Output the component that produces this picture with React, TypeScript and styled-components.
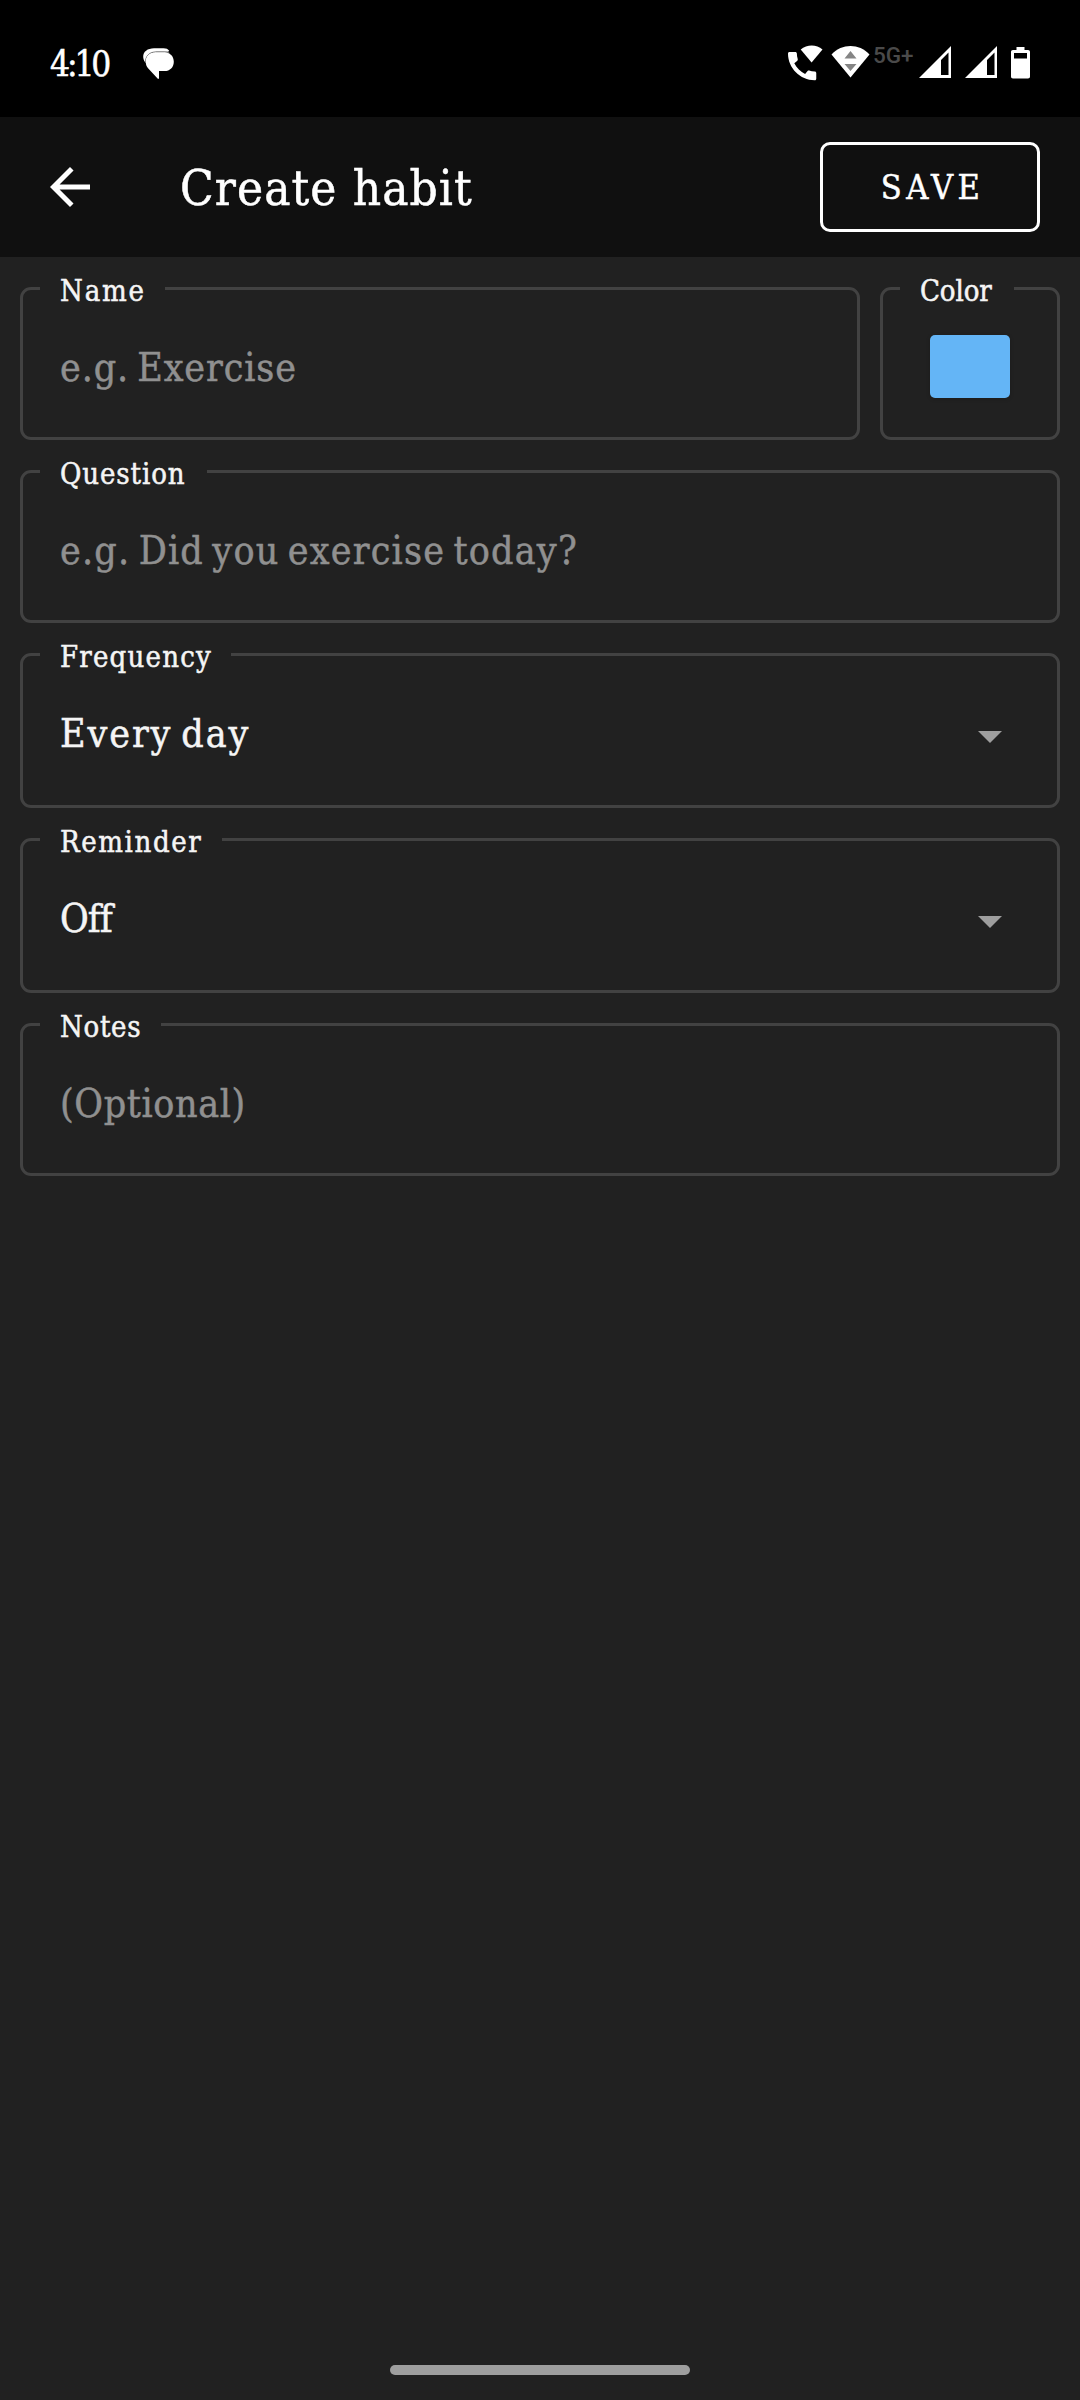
import React from "react";
import styled, { createGlobalStyle } from "styled-components";

const Global = createGlobalStyle`
  * { box-sizing: border-box; }
  html, body { margin: 0; background: #212121; }
`;

const Screen = styled.main`
  display: flex;
  flex-direction: column;
  width: 1080px;
  height: 2400px;
  background: #212121;
  color: #f5f5f5;
  font-family: "Roboto Slab", "DejaVu Serif Condensed", "DejaVu Serif", serif;
  -webkit-text-stroke: 0.5px currentColor;
  overflow: hidden;
`;

const StatusBar = styled.header`
  display: flex;
  justify-content: space-between;
  height: 117px;
  padding: 45px 50px 0 50px;
  background: #000;
  color: #fff;
`;

const StatusGroup = styled.div`
  display: flex;
  align-items: flex-start;
`;

const Clock = styled.time`
  width: 93px;
  padding-top: 1px;
  font-size: 35px;
  line-height: 37px;
  letter-spacing: -3.100px;
  white-space: nowrap;
`;

const NetworkType = styled.span`
  width: 49px;
  padding-left: 3px;
  color: #4a4a4a;
  font-family: Roboto, sans-serif;
  font-size: 22.500px;
  font-weight: 500;
  line-height: 21px;
  white-space: nowrap;
  -webkit-text-stroke: 0;
`;

const StatusIcon = styled.svg<{ $gap?: number }>`
  display: block;
  flex: none;
  margin-right: ${(p) => p.$gap ?? 0}px;
`;

const AppBar = styled.div`
  display: flex;
  align-items: center;
  height: 140px;
  padding: 0 40px 0 50px;
  background: #101010;
  color: #fff;
`;

const IconButton = styled.button`
  display: flex;
  width: 40px;
  height: 40px;
  padding: 0;
  border: 0;
  background: none;
  color: inherit;
`;

const Title = styled.h1`
  flex: 1;
  margin: 0 0 0 90px;
  padding-top: 3px;
  font-size: 49px;
  font-weight: 400;
  line-height: 60px;
  letter-spacing: 1.100px;
`;

const SaveButton = styled.button`
  width: 220px;
  height: 90px;
  padding: 0 0 0 5px;
  border: 3px solid #fff;
  border-radius: 10px;
  background: none;
  color: inherit;
  font: inherit;
  font-size: 34px;
  letter-spacing: 4.400px;
`;

const Form = styled.form`
  display: flex;
  flex: 1;
  flex-direction: column;
  gap: 15px;
  padding: 15px 20px 0;
`;

const Row = styled.div`
  display: flex;
  gap: 20px;
`;

const Field = styled.fieldset<{ $width?: number; $height?: number }>`
  flex: none;
  width: ${(p) => p.$width ?? 1040}px;
  height: ${(p) => p.$height ?? 168}px;
  min-width: 0;
  margin: 0;
  padding: 0 55px 0 37px;
  border: 3px solid #424242;
  border-radius: 11px;
`;

const Label = styled.legend<{ $width: number; $track: number }>`
  width: ${(p) => p.$width}px;
  height: 33px;
  margin-left: -20px;
  padding: 5px 0 0 20px;
  font-size: 29px;
  line-height: 28px;
  letter-spacing: ${(p) => p.$track}px;
  white-space: nowrap;
`;

const Value = styled.div<{ $track: number; $hint?: boolean }>`
  display: flex;
  align-items: center;
  justify-content: space-between;
  height: 112px;
  padding-top: 13px;
  color: ${(p) => (p.$hint ? "#909090" : "#f5f5f5")};
  font-size: 39px;
  line-height: 50px;
  letter-spacing: ${(p) => p.$track}px;
  word-spacing: -4px;
  white-space: nowrap;
`;

const Caret = styled.svg`
  display: block;
  width: 24px;
  height: 12px;
  margin-top: 6px;
  fill: #9e9e9e;
`;

const Swatch = styled.div`
  width: 80px;
  height: 63px;
  margin: 30px 0 0 10px;
  border-radius: 5px;
  background: #64b5f6;
  box-shadow: 0 1px 4px rgba(0, 0, 0, 0.2);
`;

const NavBar = styled.footer`
  display: flex;
  justify-content: center;
  height: 35px;
`;

const NavHandle = styled.div`
  width: 300px;
  height: 10px;
  border-radius: 5px;
  background: #9e9e9e;
`;

const Down = () => (
  <Caret viewBox="0 0 24 12">
    <path d="M0 0h24L12 12z" />
  </Caret>
);

const Signal = ({ gap }: { gap: number }) => (
  <StatusIcon $gap={gap} width="32" height="33" viewBox="0 0 32 33">
    <path fill="#fff" fillRule="evenodd" d="M0 33 32 1v32zM22 15v15h7.500V7.500z" />
  </StatusIcon>
);

export default function App() {
  return (
    <Screen>
      <Global />
      <StatusBar>
        <StatusGroup>
          <Clock>4:10</Clock>
          <StatusIcon width="32" height="36" viewBox="0 0 32 36">
            <path
              fill="#fff"
              d="M11 3.300h9.500c2.800 0 4.500.8 5.700 2.500l-1 1H13.500C7 6.800 3.300 10.500 2.300 17.500.8 15.500.2 13.500.2 11.800.2 6.800 4.500 3.300 11 3.300z"
            />
            <path
              fill="#fff"
              stroke="#777"
              strokeWidth="1"
              d="M2.500 17.500C2.300 11 6.500 7 12.500 7h9c2 0 3.700.4 5 1.200"
            />
            <path
              fill="#fff"
              d="M12.500 7.500h9c5.500 0 9.300 3.600 9.300 9.200s-3.800 9.300-9.300 9.300H16v7.800h-1.200L5.300 23.500C3.500 21.600 2.800 19.500 2.800 16.700c0-5.600 3.900-9.200 9.700-9.200z"
            />
          </StatusIcon>
        </StatusGroup>
        <StatusGroup>
          <StatusIcon $gap={8} width="35" height="36" viewBox="0 0 35 36" fill="#fff">
            <path
              transform="translate(0 7) scale(1.57) translate(-3 -3)"
              d="M20.010 15.380c-1.230 0-2.420-.2-3.530-.56-.35-.12-.74-.03-1.010.24l-1.570 1.970c-2.830-1.350-5.480-3.900-6.890-6.830l1.950-1.660c.27-.28.35-.67.24-1.020-.37-1.110-.56-2.300-.56-3.530 0-.54-.45-.99-.99-.99H4.190C3.650 3 3 3.240 3 3.990 3 13.280 10.730 21 20.010 21c.71 0 .99-.63.99-1.180v-3.450c0-.54-.45-.99-.99-.99z"
            />
            <path d="M12.700 4.500C19-.8 28.500-.8 34.500 4.500L23.600 17.500z" />
          </StatusIcon>
          <StatusIcon width="39" height="33" viewBox="0 0 39 33">
            <path fill="#fff" d="M.5 9.500C11-1.800 28-1.800 38.500 9.500l-19 23z" />
            <path fill="#858585" d="M19.500 6 25.500 13.500h-12zM13.500 19h12l-6 7z" />
          </StatusIcon>
          <NetworkType>5G+</NetworkType>
          <Signal gap={14} />
          <Signal gap={14} />
          <StatusIcon width="19" height="34" viewBox="0 0 19 34">
            <path
              fill="#fff"
              fillRule="evenodd"
              d="M5.500 2h8v3H17c1.300 0 2 .7 2 2v24.500c0 1.300-.7 2-2 2H2c-1.300 0-2-.7-2-2V7c0-1.300.7-2 2-2h3.500zM3 8v5.500h13V8z"
            />
          </StatusIcon>
        </StatusGroup>
      </StatusBar>
      <AppBar>
        <IconButton aria-label="Back">
          <svg width="40" height="40" viewBox="4 4 16 16" fill="currentColor">
            <path d="M20 11H7.830l5.590-5.590L12 4l-8 8 8 8 1.410-1.410L7.830 13H20z" />
          </svg>
        </IconButton>
        <Title>Create habit</Title>
        <SaveButton>SAVE</SaveButton>
      </AppBar>
      <Form>
        <Row>
          <Field $width={840}>
            <Label $width={125} $track={1.8}>Name</Label>
            <Value $track={0.9} $hint>e.g. Exercise</Value>
          </Field>
          <Field $width={180}>
            <Label $width={114} $track={-0.1}>Color</Label>
            <Swatch />
          </Field>
        </Row>
        <Field>
          <Label $width={167} $track={0.9}>Question</Label>
          <Value $track={1.2} $hint>e.g. Did you exercise today?</Value>
        </Field>
        <Field $height={170}>
          <Label $width={191} $track={1.2}>Frequency</Label>
          <Value $track={1.9}>Every day<Down /></Value>
        </Field>
        <Field $height={170}>
          <Label $width={182} $track={1.6}>Reminder</Label>
          <Value $track={-1}>Off<Down /></Value>
        </Field>
        <Field>
          <Label $width={121} $track={0.7}>Notes</Label>
          <Value $track={0.6} $hint>(Optional)</Value>
        </Field>
      </Form>
      <NavBar>
        <NavHandle />
      </NavBar>
    </Screen>
  );
}
